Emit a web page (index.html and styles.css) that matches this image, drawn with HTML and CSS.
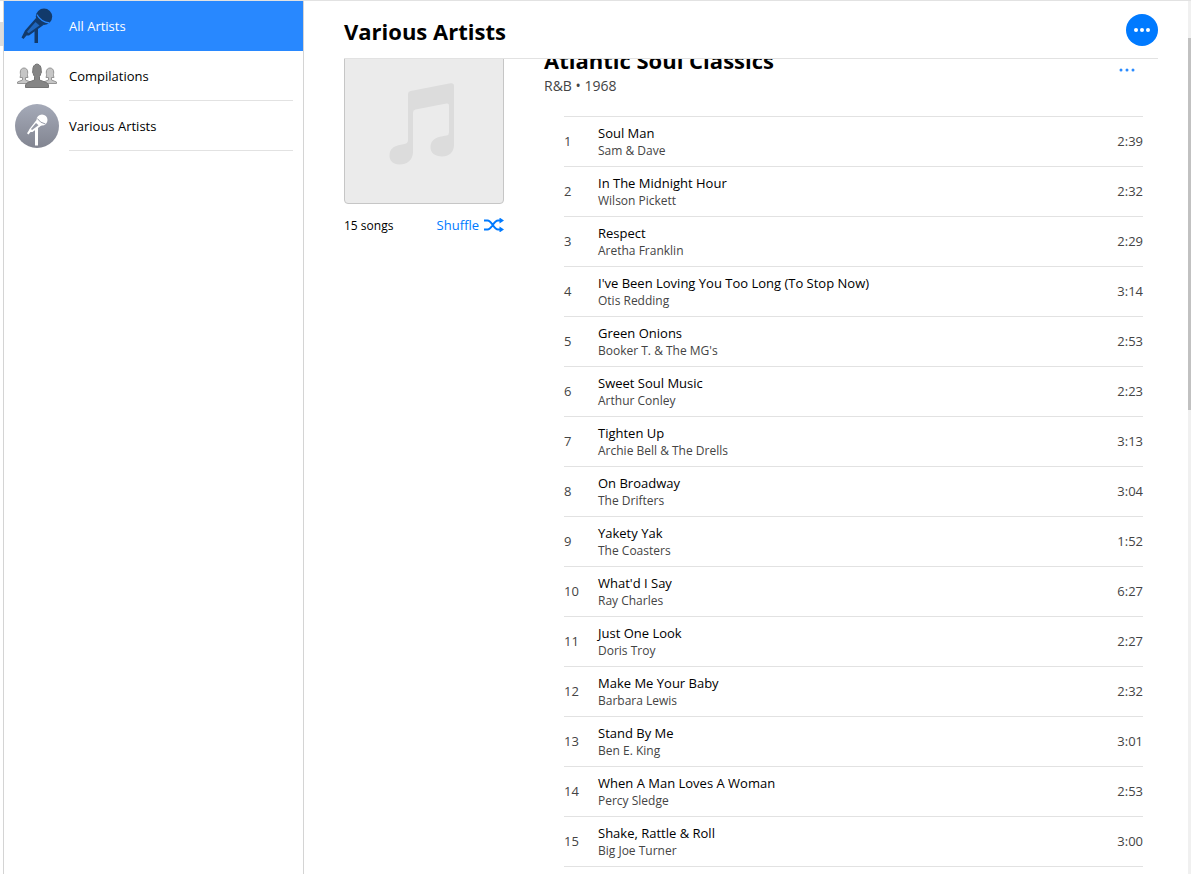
FILE: index.html
```html
<!DOCTYPE html>
<html lang="en">

<head>
    <meta charset="UTF-8">
    <meta name="viewport" content="width=device-width, initial-scale=1.0">
    <title>Various Artists</title>
    <link rel="stylesheet" href="styles.css">
</head>

<body>
    <div class="window-edge"></div>
    <nav class="sidebar">
        <ul class="artist-list">
            <li>
                <a href="#" class="artist selected">
                    <svg class="artist-icon" viewBox="0 0 44 44">
                        <g fill="#123a6b">
                            <path d="M19.500 25L23 22V39H19.500z"/>
                            <path d="M21 14L28.500 21L14 31.500L11.500 31.500L8.500 35L6.500 33.500L8.500 29.500L10 26.500z"/>
                            <circle cx="29" cy="12.700" r="8.200"/>
                        </g>
                        <path d="M20.500 18L24.500 21.500L13.500 29.200L12 27.700z" fill="#1f66bd"/>
                        <path d="M21.800 10.500Q26 18 34.500 19" fill="none" stroke="#2888ff" stroke-width="1.300"/>
                    </svg>
                    <span>All Artists</span>
                </a>
            </li>
            <li>
                <a href="#" class="artist">
                    <svg class="artist-icon" viewBox="0 0 44 44">
                        <g fill="#c6c6c6" stroke="#959595">
                            <path id="person" d="M2.500 29.500V28L7.500 26V23.500H5C6 21 5.200 20 5.300 18C5.300 15.500 7 14 9 14S12.700 15.500 12.700 18C12.800 20 12 21 13 23.500H10.500V26L15.500 28V29.500z"/>
                            <use href="#person" x="26"/>
                        </g>
                        <path d="M10.500 33.500V31Q11 29 14 28L19.500 26V22.500Q18.500 21.500 18.200 19.500Q17 18.500 17.800 17Q17.500 10.500 22 10Q26.500 10.500 26.200 17Q27 18.500 25.800 19.500Q25.500 21.500 24.500 22.500V26L30 28Q33 29 33.500 31V33.500z" fill="#858585" stroke="#747474"/>
                    </svg>
                    <span>Compilations</span>
                </a>
            </li>
            <li>
                <a href="#" class="artist">
                    <svg class="artist-icon" viewBox="0 0 44 44">
                        <defs>
                            <linearGradient id="disc" x1="0" y1="0" x2="0" y2="1">
                                <stop offset="0" stop-color="#a5aab8"/>
                                <stop offset="1" stop-color="#828591"/>
                            </linearGradient>
                        </defs>
                        <circle cx="22" cy="22" r="22" fill="url(#disc)"/>
                        <g fill="#fff">
                            <path d="M20 25L23 22.500V41.500H20z"/>
                            <path d="M21.500 16L27 21L17.500 28L15.500 28L13.500 30.500L12 29.300L13.500 27L14.500 25z"/>
                            <circle cx="27" cy="16" r="5.500"/>
                        </g>
                        <path d="M21 19L23.500 21.200L17 26L16 25z" fill="#969aa7"/>
                        <path d="M22.300 14.500Q25 19 30.500 20" fill="none" stroke="#969aa7"/>
                    </svg>
                    <span>Various Artists</span>
                </a>
            </li>
        </ul>
    </nav>

    <main>
        <header>
            <h1>Various Artists</h1>
            <button type="button" class="more-button" aria-label="More options">
                <svg width="16" height="4" viewBox="0 0 16 4" fill="#fff">
                    <circle cx="2" cy="2" r="2"/>
                    <circle cx="8" cy="2" r="2"/>
                    <circle cx="14" cy="2" r="2"/>
                </svg>
            </button>
        </header>

        <div class="content">
            <article class="album">
                <div class="album-side">
                    <div class="album-art">
                        <svg width="66" height="82" viewBox="0 0 66 82" fill="#dcdcdc">
                            <path d="M19 11Q19 8.500 21.500 8L61.500 .2Q65 -.3 65 3V62C65 69 60 73.500 53 73.500C46 73.500 41.500 70 41.500 64C41.500 58 46 54.500 52 53.500L57.500 52.500Q60 52 60 49.500V22.500Q60 20 57.500 20.500L26.500 26.500Q24 27 24 29.500V69C24 77 18 81.500 10.500 81.500C4 81.500 .5 78 .5 72.500C.5 66 5 63 10.500 62L15.500 61Q19 60.300 19 57Z"/>
                        </svg>
                    </div>
                    <div class="album-info">
                        <span>15 songs</span>
                        <button type="button" class="shuffle">
                            Shuffle
                            <svg width="20" height="14" viewBox="0 0 20 14">
                                <path d="M0 2.500h3.500C8 2.500 9.500 11.500 14 11.500h2.500M0 11.500h3.500C8 11.500 9.500 2.500 14 2.500h2.500" fill="none" stroke="#007aff" stroke-width="2"/>
                                <path d="M15.500 -.5L20 2.500 15.500 5.500zM15.500 8.500L20 11.500 15.500 14.500z" fill="#007aff"/>
                            </svg>
                        </button>
                    </div>
                </div>

                <div class="album-main">
                    <div class="album-header">
                        <div>
                            <h2>Atlantic Soul Classics</h2>
                            <p>R&amp;B • 1968</p>
                        </div>
                        <button type="button" class="album-more" aria-label="Album options">
                            <svg width="16" height="4" viewBox="0 0 16 4" fill="#2a8bff">
                                <circle cx="2" cy="2" r="1.500"/>
                                <circle cx="8" cy="2" r="1.500"/>
                                <circle cx="14" cy="2" r="1.500"/>
                            </svg>
                        </button>
                    </div>

                    <table class="songs">
                        <tbody id="songList"></tbody>
                    </table>
                </div>
            </article>
        </div>
    </main>
    <div class="scrollbar">
        <div class="scrollbar-thumb"></div>
    </div>

    <script src="songs.js"></script>
</body>

</html>
```
FILE: styles.css
```css
* {
    box-sizing: border-box;
}

body {
    font-family: 'Segoe UI', 'Open Sans', sans-serif;
    font-size: 13px;
    margin: 0;
    display: flex;
    height: 100vh;
    overflow: hidden;
    color: #000;
    background-color: #FFF;
    border-top: 1px solid #E2E2E2;
}

h1, h2, p {
    margin: 0;
}

button {
    font: inherit;
    border: none;
    padding: 0;
    background: none;
    cursor: pointer;
}

svg {
    display: block;
    flex: none;
}

.window-edge {
    width: 3px;
    height: 24px;
    margin-top: 21px;
    background-color: #DCDCDC;
}

.sidebar {
    flex: none;
    width: 301px;
    border-left: 1px solid #D4D4D4;
    border-right: 1px solid #D4D4D4;
}

.artist-list {
    list-style: none;
    margin: 0;
    padding: 0;
}

.artist {
    display: flex;
    align-items: center;
    gap: 10px;
    height: 50px;
    padding: 0 10px 0 11px;
    color: #000;
    text-decoration: none;
}

.artist-icon {
    width: 44px;
    height: 44px;
}

.artist span {
    flex: 1;
    height: 50px;
    line-height: 51px;
    border-bottom: 1px solid #E2E2E2;
}

.artist.selected {
    background-color: #2888FF;
    color: #FFF;
}

.artist.selected span {
    border-color: transparent;
}

main {
    flex: 1;
    min-width: 0;
    display: flex;
    flex-direction: column;
}

header {
    flex: none;
    display: flex;
    justify-content: space-between;
    align-items: center;
    height: 58px;
    margin: 0 30px 0 40px;
    border-bottom: 1px solid #E2E2E2;
}

h1 {
    font-size: 22px;
    line-height: 30px;
    padding-top: 2px;
}

.more-button {
    display: flex;
    align-items: center;
    justify-content: center;
    width: 32px;
    height: 32px;
    border-radius: 50%;
    background-color: #007AFF;
}

.content {
    flex: 1;
    overflow: hidden;
    padding: 0 44px 0 40px;
}

/* list is scrolled a little under the header */
.album {
    display: flex;
    gap: 40px;
    margin-top: -15px;
}

.album-side {
    flex: none;
    width: 160px;
}

.album-art {
    display: flex;
    align-items: center;
    justify-content: center;
    height: 160px;
    padding-right: 4px;
    border: 1px solid #C6C6C6;
    border-radius: 4px;
    background-color: #EBEBEB;
}

.album-info {
    display: flex;
    justify-content: space-between;
    align-items: center;
    padding-top: 12px;
    font-size: 12px;
}

.shuffle {
    display: flex;
    align-items: center;
    gap: 5px;
    font-size: 13px;
    color: #007AFF;
}

.album-main {
    flex: 1;
    min-width: 0;
}

.album-header {
    display: flex;
    justify-content: space-between;
    align-items: center;
    height: 54px;
    margin-bottom: 18px;
}

h2 {
    font-size: 22px;
    line-height: 30px;
}

.album-header p {
    font-size: 14px;
    line-height: 22px;
    color: #444;
}

.album-more {
    padding: 7px 9px 9px;
}

.songs {
    width: calc(100% - 21px);
    margin-left: 20px;
    border-collapse: collapse;
    border-top: 1px solid #E2E2E2;
    color: #444;
}

.songs tr {
    height: 50px;
    border-bottom: 1px solid #E2E2E2;
}

.songs td {
    padding: 0;
}

.songs .number {
    width: 34px;
    padding-bottom: 2px;
}

.songs .time {
    width: 60px;
    padding-bottom: 2px;
    text-align: right;
}

.song-title {
    line-height: 18px;
    color: #000;
}

.song-artist {
    font-size: 12px;
    line-height: 17px;
}

.scrollbar {
    flex: none;
    width: 3px;
    padding-top: 37px;
    background-color: #F0F0F0;
}

.scrollbar-thumb {
    height: 372px;
    background-color: #C1C1C1;
}
```
FILE: songs.js
```js
const songs = [
    ['Soul Man', 'Sam & Dave', '2:39'],
    ['In The Midnight Hour', 'Wilson Pickett', '2:32'],
    ['Respect', 'Aretha Franklin', '2:29'],
    ["I've Been Loving You Too Long (To Stop Now)", 'Otis Redding', '3:14'],
    ['Green Onions', "Booker T. & The MG's", '2:53'],
    ['Sweet Soul Music', 'Arthur Conley', '2:23'],
    ['Tighten Up', 'Archie Bell & The Drells', '3:13'],
    ['On Broadway', 'The Drifters', '3:04'],
    ['Yakety Yak', 'The Coasters', '1:52'],
    ["What'd I Say", 'Ray Charles', '6:27'],
    ['Just One Look', 'Doris Troy', '2:27'],
    ['Make Me Your Baby', 'Barbara Lewis', '2:32'],
    ['Stand By Me', 'Ben E. King', '3:01'],
    ['When A Man Loves A Woman', 'Percy Sledge', '2:53'],
    ['Shake, Rattle & Roll', 'Big Joe Turner', '3:00']
];

const songList = document.getElementById('songList');

function addCell(row, className) {
    const cell = row.insertCell();
    cell.className = className;
    return cell;
}

songs.forEach(([title, artist, time], index) => {
    const row = songList.insertRow();
    addCell(row, 'number').textContent = index + 1;

    const songCell = addCell(row, 'song');
    const songTitle = document.createElement('div');
    songTitle.className = 'song-title';
    songTitle.textContent = title;
    const songArtist = document.createElement('div');
    songArtist.className = 'song-artist';
    songArtist.textContent = artist;
    songCell.append(songTitle, songArtist);

    addCell(row, 'time').textContent = time;
});
```
